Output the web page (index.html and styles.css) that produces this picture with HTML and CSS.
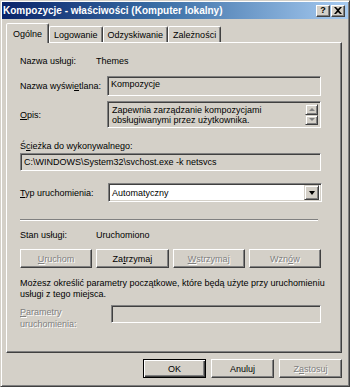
FILE: index.html
```html
<!DOCTYPE html>
<html lang="pl">
<head>
    <meta charset="UTF-8">
    <title>Kompozycje - właściwości (Komputer lokalny)</title>
    <link rel="stylesheet" href="styles.css">
</head>
<body>
    <div class="window">
        <div class="titlebar">
            <span class="title">Kompozycje - właściwości (Komputer lokalny)</span>
            <div class="caption-btns">
                <span class="cap-btn help">?</span>
                <span class="cap-btn">
                    <svg width="8" height="7" viewBox="0 0 8 7"><path d="M0 0h2l2 2 2-2h2L5 3.5 8 7H6L4 5 2 7H0l3-3.5z" fill="#000"/></svg>
                </span>
            </div>
        </div>

        <div class="content">
            <div class="tabs">
                <div class="tab active">Ogólne</div>
                <div class="tab">Logowanie</div>
                <div class="tab">Odzyskiwanie</div>
                <div class="tab">Zależności</div>
            </div>

            <div class="panel">
                <div class="row row-name">
                    <span class="label w-short">Nazwa usługi:</span>
                    <span>Themes</span>
                </div>

                <div class="row row-display">
                    <span class="label w-long">Nazwa wyświ<u>e</u>tlana:</span>
                    <div class="field display-field">Kompozycje</div>
                </div>

                <div class="row row-desc">
                    <span class="label w-long"><u>O</u>pis:</span>
                    <div class="field desc-field">
                        <div class="desc-text">Zapewnia zarządzanie kompozycjami obsługiwanymi przez użytkownika.</div>
                        <div class="scrollbar">
                            <span class="sb-btn"><i class="arrow up"></i></span>
                            <span class="sb-track"></span>
                            <span class="sb-btn"><i class="arrow down"></i></span>
                        </div>
                    </div>
                </div>

                <div class="path-label">Ś<u>c</u>ieżka do wykonywalnego:</div>
                <div class="field path-field">C:\WINDOWS\System32\svchost.exe -k netsvcs</div>

                <div class="row row-type">
                    <span class="label w-long"><u>T</u>yp uruchomienia:</span>
                    <div class="combo">
                        <span class="combo-value">Automatyczny</span>
                        <span class="combo-btn"><i class="arrow down"></i></span>
                    </div>
                </div>

                <div class="separator"></div>

                <div class="row row-status">
                    <span class="label w-short">Stan usługi:</span>
                    <span>Uruchomiono</span>
                </div>

                <div class="service-btns">
                    <span class="btn disabled"><u>U</u>ruchom</span>
                    <span class="btn">Za<u>t</u>rzymaj</span>
                    <span class="btn disabled"><u>W</u>strzymaj</span>
                    <span class="btn disabled">Wzn<u>ó</u>w</span>
                </div>

                <p class="hint">Możesz określić parametry początkowe, które będą użyte przy uruchomieniu usługi z tego miejsca.</p>

                <div class="row row-params">
                    <span class="label params-label disabled-text"><u>P</u>arametry<br>uruchomienia:</span>
                    <div class="field params-field"></div>
                </div>
            </div>

            <div class="actions">
                <span class="btn dialog-btn default">OK</span>
                <span class="btn dialog-btn">Anuluj</span>
                <span class="btn dialog-btn disabled">Z<u>a</u>stosuj</span>
            </div>
        </div>
    </div>
</body>
</html>
```

FILE: styles.css
```css
* { margin: 0; padding: 0; box-sizing: border-box; }
body {
    font-family: "Liberation Sans", Arial, sans-serif;
    font-size: 9px;
    color: #000;
    background: #d4d0c8;
}
u { text-decoration: underline; text-underline-offset: 1px; }

.window {
    width: 350px;
    height: 387px;
    background: #d4d0c8;
    border: 1px solid;
    border-color: #d4d0c8 #404040 #404040 #d4d0c8;
    box-shadow: inset 1px 1px #fff, inset -1px -1px #808080;
    padding: 1px;
}

.titlebar {
    height: 17px;
    background: linear-gradient(90deg, #0a246a 0%, #3a6ea5 45%, #a6caf0 100%);
    display: flex;
    align-items: center;
    justify-content: space-between;
    padding: 0 3px 0 1px;
}
.title {
    color: #fff;
    font-weight: bold;
    font-size: 10px;
    white-space: nowrap;
}
.caption-btns { display: flex; gap: 1px; }
.cap-btn {
    width: 14px;
    height: 12px;
    background: #d4d0c8;
    border: 1px solid;
    border-color: #fff #404040 #404040 #fff;
    box-shadow: inset -1px -1px #808080;
    display: flex;
    align-items: center;
    justify-content: center;
    font-weight: bold;
    font-size: 9px;
    line-height: 1;
}

.content { padding: 4px 6px 0 4px; }

.tabs {
    display: flex;
    align-items: flex-end;
    height: 19px;
    padding-left: 3px;
    position: relative;
    z-index: 1;
}
.tab {
    height: 16px;
    padding: 0 4px;
    border: 1px solid;
    border-bottom: none;
    border-color: #fff #404040 transparent #fff;
    box-shadow: inset -1px 0 #808080;
    border-radius: 2px 2px 0 0;
    display: flex;
    align-items: center;
    white-space: nowrap;
}
.tab.active {
    height: 20px;
    margin: 0 -2px -1px -3px;
    padding: 0 6px;
    background: #d4d0c8;
    position: relative;
    z-index: 2;
}
.tab.active + .tab { margin-left: 2px; }

.panel {
    height: 311px;
    border: 1px solid;
    border-color: #fff #404040 #404040 #fff;
    box-shadow: inset -1px -1px #808080;
    padding: 11px 0 0 13px;
}

.row { display: flex; align-items: center; }
.label { flex: none; }
.w-short { width: 76px; }
.w-long { width: 87px; }

.field {
    background: #d4d0c8;
    border: 1px solid;
    border-color: #808080 #fff #fff #808080;
    box-shadow: inset 1px 1px #404040, inset -1px -1px #d4d0c8;
}

.row-name { height: 14px; }

.row-display { margin-top: 8px; }
.display-field {
    width: 214px;
    height: 20px;
    padding: 2px 3px;
}

.row-desc { margin-top: 5px; }
.desc-field {
    width: 214px;
    height: 27px;
    display: flex;
    padding: 2px;
}
.desc-text {
    flex: 1;
    padding: 1px 2px 0 2px;
    line-height: 10px;
}
.scrollbar {
    width: 13px;
    display: flex;
    flex-direction: column;
}
.sb-btn {
    height: 11px;
    background: #d4d0c8;
    border: 1px solid;
    border-color: #d4d0c8 #404040 #404040 #d4d0c8;
    box-shadow: inset 1px 1px #fff, inset -1px -1px #808080;
    display: flex;
    align-items: center;
    justify-content: center;
}
.sb-track {
    flex: 1;
    background: #e8e6e1;
}
.arrow {
    width: 0;
    height: 0;
    border-left: 3px solid transparent;
    border-right: 3px solid transparent;
}
.arrow.up { border-bottom: 3px solid #808080; }
.arrow.down { border-top: 3px solid #808080; }

.path-label {
    margin-top: 12px;
    height: 12px;
    line-height: 12px;
}
.path-field {
    margin-top: 1px;
    width: 301px;
    height: 18px;
    padding: 0 3px;
    display: flex;
    align-items: center;
}

.row-type { margin-top: 12px; }
.combo {
    width: 214px;
    height: 19px;
    margin-left: 1px;
    background: #fff;
    border: 1px solid;
    border-color: #808080 #fff #fff #808080;
    box-shadow: inset 1px 1px #404040, inset -1px -1px #d4d0c8;
    display: flex;
    align-items: center;
    padding: 2px;
}
.combo-value { flex: 1; padding-left: 1px; }
.combo-btn {
    width: 15px;
    height: 15px;
    background: #d4d0c8;
    border: 1px solid;
    border-color: #d4d0c8 #404040 #404040 #d4d0c8;
    box-shadow: inset 1px 1px #fff, inset -1px -1px #808080;
    display: flex;
    align-items: center;
    justify-content: center;
}
.combo-btn .arrow.down { border-top: 4px solid #000; border-left-width: 3.5px; border-right-width: 3.5px; }

.separator {
    margin-top: 17px;
    width: 298px;
    height: 2px;
    border-top: 1px solid #808080;
    border-bottom: 1px solid #fff;
}

.row-status { margin-top: 8px; height: 12px; }

.service-btns {
    margin-top: 8px;
    display: flex;
    gap: 4px;
    width: 301px;
}
.btn {
    height: 19px;
    background: #d4d0c8;
    border: 1px solid;
    border-color: #fff #404040 #404040 #fff;
    box-shadow: inset -1px -1px #808080;
    display: flex;
    align-items: center;
    justify-content: center;
}
.service-btns .btn { flex: 1; }
.disabled, .disabled-text {
    color: #808080;
    text-shadow: 1px 1px #fff;
}

.hint {
    margin-top: 10px;
    width: 305px;
    line-height: 11px;
}

.row-params { margin-top: 6px; align-items: flex-start; }
.params-label {
    width: 91px;
    line-height: 12px;
}
.params-field {
    width: 210px;
    height: 18px;
    margin-top: -1px;
}

.actions {
    margin-top: 6px;
    display: flex;
    justify-content: flex-end;
    gap: 5px;
}
.dialog-btn { width: 63px; }
.dialog-btn.default {
    border: 1px solid #000;
    box-shadow: inset 1px 1px #fff, inset -1px -1px #404040, inset -2px -2px #808080;
}
```
